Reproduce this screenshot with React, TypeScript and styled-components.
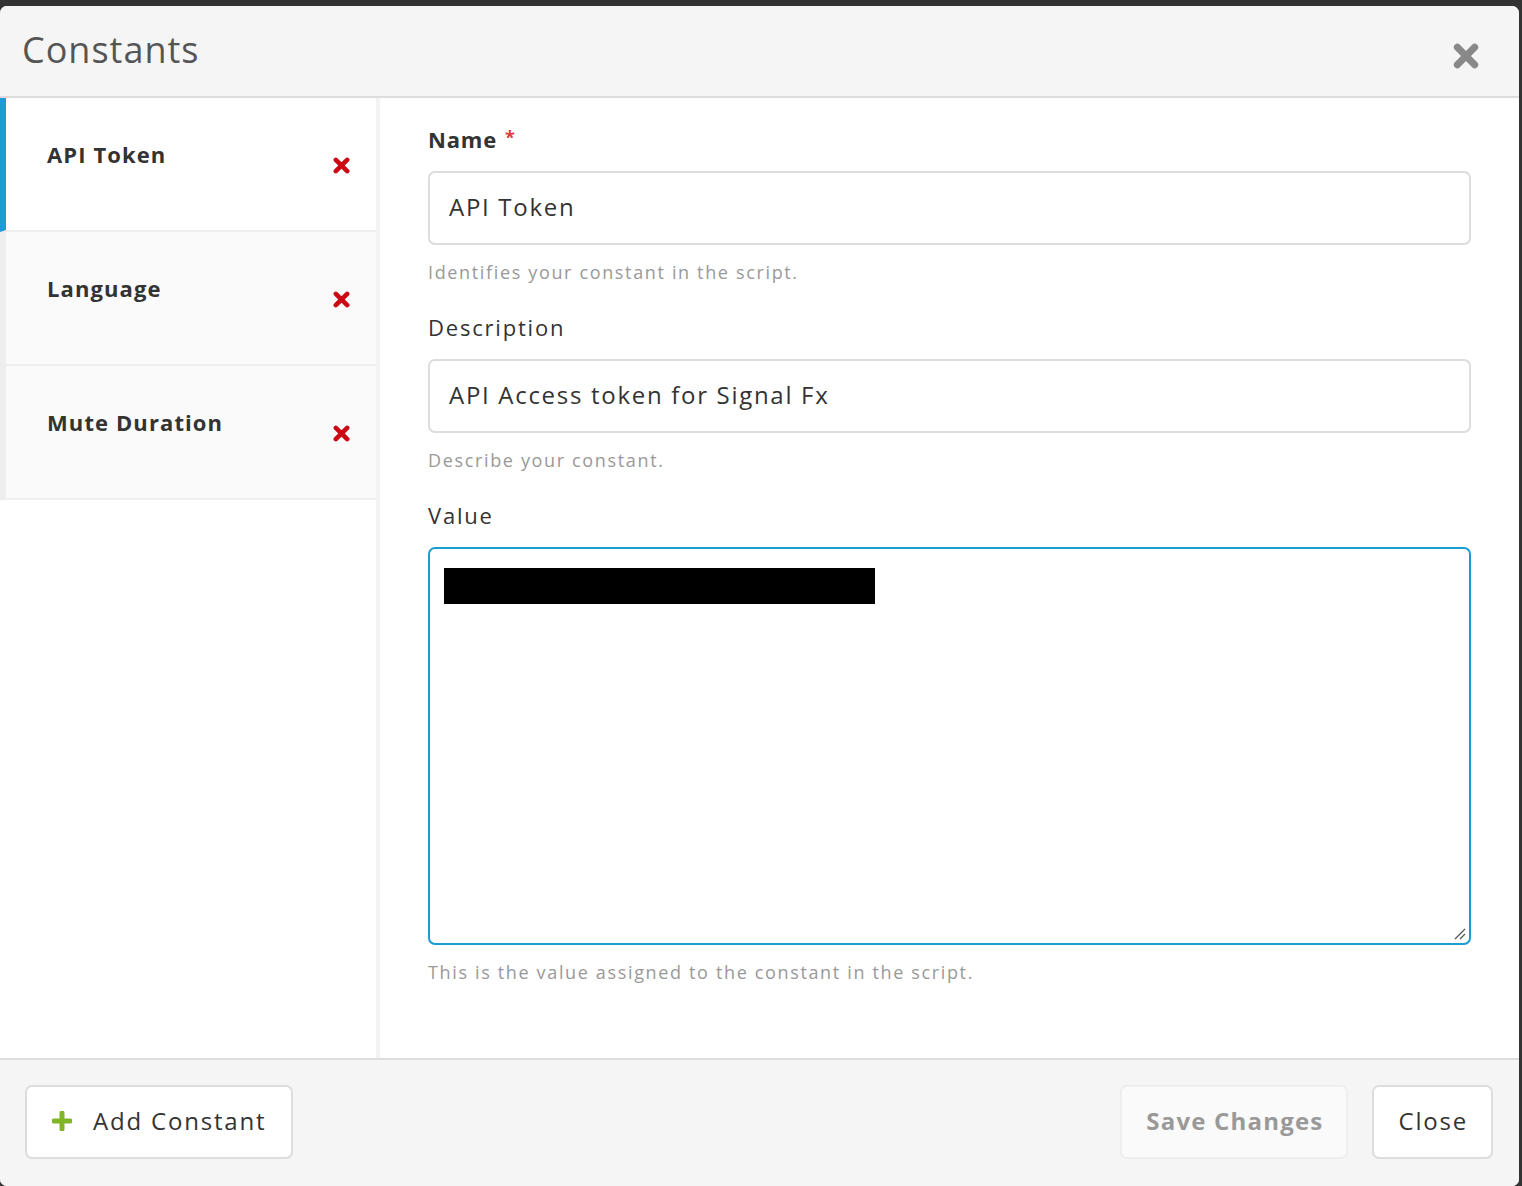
import React from "react"
import styled, { createGlobalStyle } from "styled-components"

const GlobalStyle = createGlobalStyle`
  *, *::before, *::after {
    box-sizing: border-box;
  }
  html, body {
    margin: 0;
    padding: 0;
    background: #333;
    font-family: "Open Sans", "Liberation Sans", sans-serif;
    overflow: hidden;
  }
`

const blue = "#1a9dd0"

const Page = styled.div`
  padding-top: 6px;
  width: 1522px;
  height: 1186px;
`

const Modal = styled.div`
  width: 1519px;
  height: 1180px;
  background: #fff;
  border-radius: 7px;
  overflow: hidden;
  display: flex;
  flex-direction: column;
`

const Header = styled.header`
  height: 92px;
  flex: none;
  background: #f5f5f5;
  border-bottom: 2px solid #ddd;
  display: flex;
  align-items: center;
  justify-content: space-between;
  padding: 0 40px 0 22px;
`

const Title = styled.h1`
  margin: 0;
  font-size: 36px;
  font-weight: 400;
  color: #555;
  letter-spacing: 1px;
  transform: translateY(-2px);
`

const CloseIcon = styled.button`
  border: 0;
  background: none;
  padding: 0;
  width: 26px;
  height: 26px;
  display: flex;
  transform: translateY(5px);
`

const Body = styled.div`
  flex: 1;
  display: flex;
  min-height: 0;
`

const Sidebar = styled.nav`
  width: 380px;
  flex: none;
  border-right: 4px solid #f3f3f3;
`

const Item = styled.div<{ $active?: boolean }>`
  height: 134px;
  border-bottom: 2px solid #eee;
  border-left: 6px solid ${(p) => (p.$active ? blue : "#eee")};
  background: ${(p) => (p.$active ? "#fff" : "#fafafa")};
  display: flex;
  align-items: flex-start;
  justify-content: space-between;
  padding: 41px 26px 0 41px;
`

const ItemName = styled.span`
  font-size: 22px;
  line-height: 30px;
  font-weight: 700;
  color: #333;
  letter-spacing: 1.1px;
`

const RemoveIcon = styled.span`
  width: 17px;
  height: 17px;
  display: flex;
  margin-top: 18px;
`

const Main = styled.section`
  flex: 1;
  padding: 26px 48px 0;
`

const Label = styled.label<{ $bold?: boolean }>`
  display: block;
  font-size: 22px;
  line-height: 30px;
  font-weight: ${(p) => (p.$bold ? 700 : 400)};
  color: #333;
  letter-spacing: ${(p) => (p.$bold ? "0.8px" : "1.8px")};
  margin-bottom: 17px;
`

const Required = styled.span`
  color: #e0393e;
  font-size: 18px;
  margin-left: 8px;
  vertical-align: top;
  line-height: 26px;
`

const Input = styled.div`
  height: 74px;
  border: 2px solid #ddd;
  border-radius: 7px;
  display: flex;
  align-items: center;
  padding: 0 19px 3px;
  font-size: 24px;
  color: #333;
  letter-spacing: 1.7px;
`

const Help = styled.p<{ $last?: boolean }>`
  margin: 15px 0 ${(p) => (p.$last ? 0 : "28px")};
  font-size: 18px;
  line-height: 24px;
  color: #999;
  letter-spacing: 1.65px;
`

const TextArea = styled.div`
  position: relative;
  height: 398px;
  border: 2px solid ${blue};
  border-radius: 7px;
  padding: 19px 14px;
`

const Redacted = styled.div`
  width: 431px;
  height: 36px;
  background: #000;
`

const Grip = styled.svg`
  position: absolute;
  right: 3px;
  bottom: 3px;
`

const Footer = styled.footer`
  flex: none;
  height: 128px;
  background: #f5f5f5;
  border-top: 2px solid #ddd;
  display: flex;
  align-items: flex-start;
  padding: 25px 26px 0 25px;
  gap: 24px;
`

const Button = styled.button<{ $disabled?: boolean; $bold?: boolean }>`
  height: 74px;
  border-radius: 7px;
  border: 2px solid ${(p) => (p.$disabled ? "#eee" : "#ddd")};
  background: ${(p) => (p.$disabled ? "#fafafa" : "#fff")};
  color: ${(p) => (p.$disabled ? "#999" : "#333")};
  font-family: inherit;
  font-size: 24px;
  font-weight: ${(p) => (p.$bold ? 700 : 400)};
  letter-spacing: ${(p) => (p.$bold ? "1.2px" : "1.8px")};
  padding: 0 23px 3px 24px;
  display: flex;
  align-items: center;
  gap: 21px;
`

const AddButton = styled(Button)`
  padding: 0 25px 3px 25px;
`

const Spacer = styled.div`
  flex: 1;
`

const Times = ({ color, size, w }: { color: string; size: number; w: number }) => (
  <svg width={size} height={size} viewBox="0 0 24 24">
    <path d="M4 4L20 20M20 4L4 20" stroke={color} strokeWidth={w} strokeLinecap="round" />
  </svg>
)

const Plus = () => (
  <svg width="20" height="20" viewBox="0 0 20 20">
    <path d="M10 2V18M2 10H18" stroke="#80b526" strokeWidth="5" strokeLinecap="round" />
  </svg>
)

const constants = ["API Token", "Language", "Mute Duration"]

export default function App() {
  return (
    <Page>
      <GlobalStyle />
      <Modal>
        <Header>
          <Title>Constants</Title>
          <CloseIcon aria-label="Close">
            <Times color="#888" size={26} w={6.5} />
          </CloseIcon>
        </Header>
        <Body>
          <Sidebar>
            {constants.map((name, i) => (
              <Item key={name} $active={i === 0}>
                <ItemName>{name}</ItemName>
                <RemoveIcon>
                  <Times color="#cc0814" size={17} w={6.5} />
                </RemoveIcon>
              </Item>
            ))}
          </Sidebar>
          <Main>
            <Label $bold>
              Name<Required>*</Required>
            </Label>
            <Input>API Token</Input>
            <Help>Identifies your constant in the script.</Help>
            <Label>Description</Label>
            <Input>API Access token for Signal Fx</Input>
            <Help>Describe your constant.</Help>
            <Label>Value</Label>
            <TextArea>
              <Redacted />
              <Grip width="12" height="12" viewBox="0 0 12 12">
                <path d="M1 11L11 1M6 11L11 6" stroke="#555" strokeWidth="1.3" />
              </Grip>
            </TextArea>
            <Help $last>This is the value assigned to the constant in the script.</Help>
          </Main>
        </Body>
        <Footer>
          <AddButton>
            <Plus />
            Add Constant
          </AddButton>
          <Spacer />
          <Button $disabled $bold>
            Save Changes
          </Button>
          <Button>Close</Button>
        </Footer>
      </Modal>
    </Page>
  )
}
